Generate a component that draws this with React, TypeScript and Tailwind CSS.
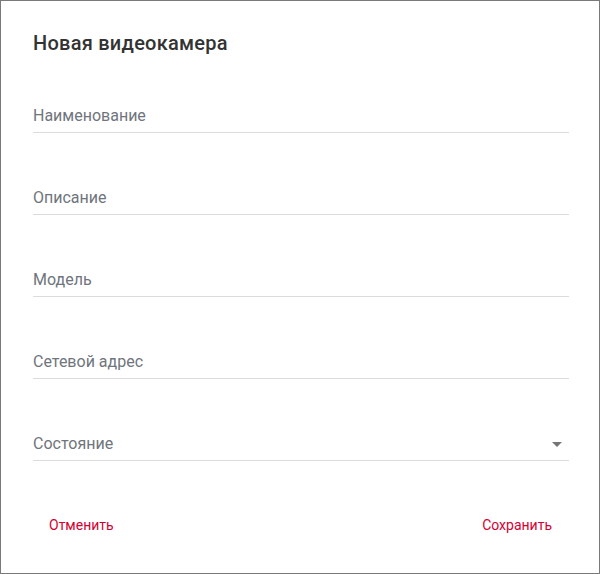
export default function App() {
  const fields = ['Наименование', 'Описание', 'Модель', 'Сетевой адрес'];

  return (
    <div className="h-[574px] w-[600px] bg-white border border-[#7a7a7a] font-['Roboto','Liberation_Sans',sans-serif]">
      <div className="pl-[32px] pr-[30px]">
        {/* Заголовок */}
        <div className="h-[50px] pt-[30px]">
          <h2 className="text-[20px] leading-[24px] font-medium tracking-[0.25px] text-[#333333]">Новая видеокамера</h2>
        </div>

        {/* Поля */}
        {fields.map(label => (
          <div key={label} className="pt-[53px] pb-[4px] border-b border-[#dcdcdc]">
            <div className="text-[16px] leading-[24px] text-[#6f757c]">{label}</div>
          </div>
        ))}
        <div className="pt-[53px] pb-[4px] border-b border-[#dcdcdc] flex items-center justify-between">
          <div className="text-[16px] leading-[24px] text-[#6f757c]">Состояние</div>
          <svg width="10" height="5" viewBox="0 0 10 5" className="mr-[7px] mt-[1px]">
            <path d="M0 0 L10 0 L5 5 Z" fill="#757575" />
          </svg>
        </div>

        {/* Кнопки */}
        <div className="mt-[46px] flex justify-between">
          <button className="h-[36px] px-[16px] text-[14px] text-[#d50032]">Отменить</button>
          <button className="h-[36px] pl-[16px] pr-[17px] text-[14px] text-[#d50032]">Сохранить</button>
        </div>
      </div>
    </div>
  );
}
